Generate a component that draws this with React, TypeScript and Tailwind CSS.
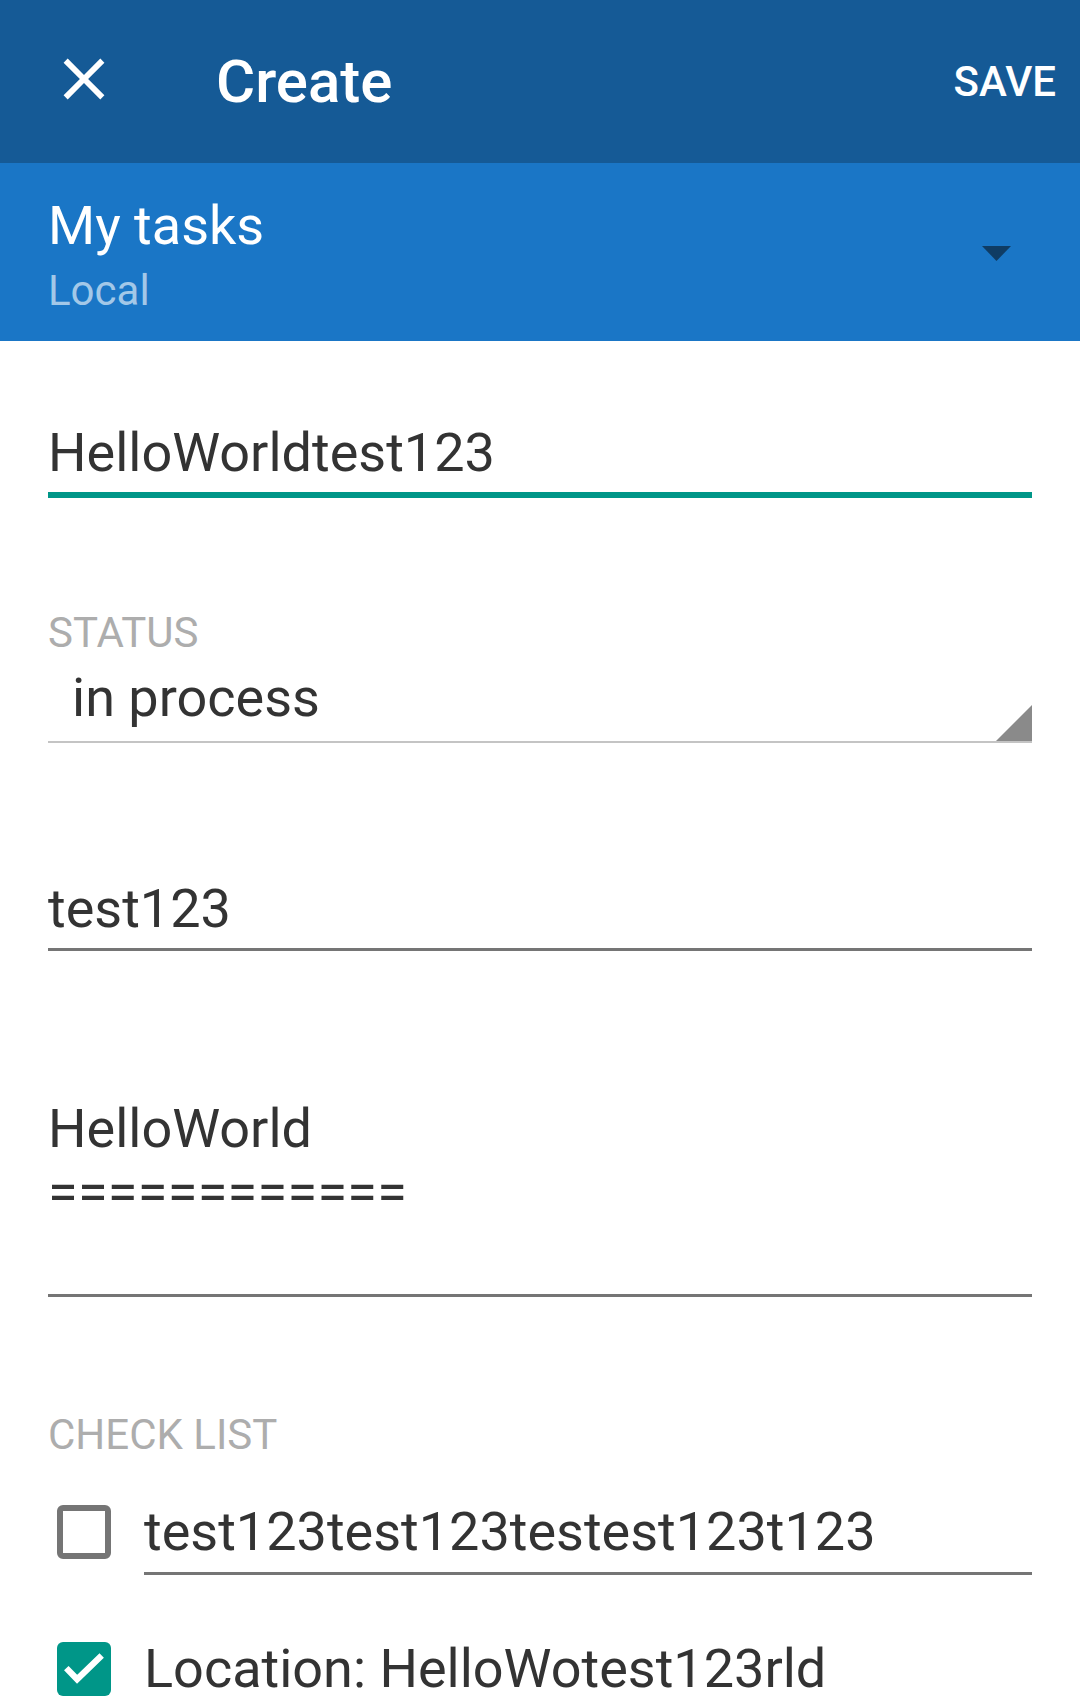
import React from "react";

function CloseIcon() {
  return (
    <svg width="70" height="70" viewBox="0 0 24 24" className="mb-[6px]">
      <path
        fill="#ffffff"
        d="M19 6.41L17.59 5 12 10.59 6.41 5 5 6.41 10.59 12 5 17.59 6.41 19 12 13.41 17.59 19 19 17.59 13.41 12z"
      />
    </svg>
  );
}

function CheckBox({ checked }: { checked: boolean }) {
  if (checked) {
    return (
      <svg width="54" height="54" viewBox="0 0 18 18">
        <rect x="0" y="0" width="18" height="18" rx="2" fill="#009688" />
        <polyline
          points="3.1,8.7 6.7,12.4 14.9,4.5"
          fill="none"
          stroke="#ffffff"
          strokeWidth="2.1"
        />
      </svg>
    );
  }
  return <div className="h-[54px] w-[54px] rounded-[6px] border-[6px] border-[#757575]" />;
}

function CheckItem({ text, checked, className }: { text: string; checked: boolean; className?: string }) {
  return (
    <div className={`flex items-start ${className ?? ""}`}>
      <div className="flex h-[64px] w-[96px] items-center pl-[9px]">
        <CheckBox checked={checked} />
      </div>
      <div className="flex-1">
        <div className="text-[54px] leading-[64px] text-[#333333]">{text}</div>
        <div className="mt-[8px] h-[3px] bg-[#757575]" />
      </div>
    </div>
  );
}

export default function App() {
  return (
    <div className="h-[1699px] w-[1080px] overflow-hidden bg-white font-[family-name:Roboto,sans-serif]">
      {/* Toolbar */}
      <div className="flex h-[163px] items-center bg-[#155a96] text-white">
        <div className="flex w-[168px] items-center justify-center">
          <CloseIcon />
        </div>
        <div className="ml-[48px] flex-1 text-[60px] font-medium leading-[60px]">Create</div>
        <div className="pr-[24px] text-[42px] font-medium leading-[40px]">SAVE</div>
      </div>

      {/* List selector */}
      <div className="flex h-[178px] items-center justify-between bg-[#1a76c6] pl-[48px] pr-[69px]">
        <div className="self-start pt-[31px]">
          <div className="text-[54px] leading-[64px] text-white">My tasks</div>
          <div className="mt-[9px] text-[42px] leading-[48px] text-[#a3c8e8]">Local</div>
        </div>
        <svg width="29" height="15" viewBox="0 0 29 15" className="mt-[3px]">
          <polygon points="0,0 29,0 14.5,15" fill="#0f3c64" />
        </svg>
      </div>

      {/* Form */}
      <div className="px-[48px]">
        <div className="mt-[80px] text-[54px] leading-[64px] text-[#333333]">HelloWorldtest123</div>
        <div className="mt-[7px] h-[6px] bg-[#009688]" />

        <div className="mt-[111px] text-[42px] leading-[48px] text-[#adadad]">STATUS</div>
        <div className="mt-[9px] flex items-end justify-between">
          <span className="mb-[11px] pl-[24px] text-[54px] leading-[64px] text-[#333333]">in process</span>
          <svg width="36" height="36" viewBox="0 0 36 36">
            <polygon points="0,36 36,36 36,0" fill="#8a8a8a" />
          </svg>
        </div>
        <div className="h-[2px] bg-[#c4c4c4]" />

        <div className="mt-[134px] text-[54px] leading-[64px] text-[#333333]">test123</div>
        <div className="mt-[7px] h-[3px] bg-[#757575]" />

        <div className="mt-[146px] h-[192px] text-[54px] leading-[64px] text-[#333333]">
          <div>HelloWorld</div>
          <div className="tracking-[0.3px]">============</div>
        </div>
        <div className="mt-[5px] h-[3px] bg-[#757575]" />

        <div className="mt-[114px] text-[42px] leading-[48px] text-[#adadad]">CHECK LIST</div>
        <CheckItem className="mt-[41px]" text="test123test123testest123t123" checked={false} />
        <CheckItem className="mt-[62px]" text="Location: HelloWotest123rld" checked={true} />
      </div>
    </div>
  );
}
